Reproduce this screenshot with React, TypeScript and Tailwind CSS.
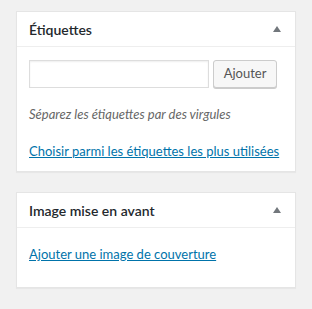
// Metabox sidebar – Étiquettes / Image mise en avant

function ToggleArrow() {
    return (
        <svg width="8" height="6" viewBox="0 0 8 6" className="block">
            <path d="M4 0 L8 6 L0 6 Z" fill="#72777c" />
        </svg>
    );
}

function Postbox({ title, children }: { title: string; children: React.ReactNode }) {
    return (
        <div className="bg-white border border-[#e5e5e5] shadow-[0_1px_1px_rgba(0,0,0,0.04)]">
            <div className="h-[35px] flex items-center justify-between pl-3 pr-[14px] border-b border-[#eeeeee]">
                <h2 className="text-[14px] font-semibold text-[#23282d]">{title}</h2>
                <ToggleArrow />
            </div>
            {children}
        </div>
    );
}

export default function App() {
    return (
        <div
            className="w-[312px] h-[309px] bg-[#f1f1f1] pt-[11px] px-4 flex flex-col gap-[20px]"
            style={{ fontFamily: "Lato, 'Noto Sans', sans-serif" }}
        >
            <Postbox title="Étiquettes">
                <div className="px-3 pt-[13px] pb-[10px]">
                    <div className="flex gap-1">
                        <input
                            type="text"
                            className="w-[180px] h-[28px] border border-[#dddddd] shadow-[inset_0_1px_2px_rgba(0,0,0,0.07)] outline-none"
                        />
                        <button className="w-[64px] h-[28px] bg-[#f7f7f7] border border-[#cccccc] rounded-[3px] shadow-[0_1px_0_#cccccc] text-[13px] text-[#555555]">
                            Ajouter
                        </button>
                    </div>
                    <p className="mt-[17px] text-[13px] italic text-[#666666] leading-[19px]">
                        Séparez les étiquettes par des virgules
                    </p>
                    <p className="mt-[18px] text-[13px] leading-[19px] whitespace-nowrap">
                        <a href="#" className="text-[#0073aa] underline">
                            Choisir parmi les étiquettes les plus utilisées
                        </a>
                    </p>
                </div>
            </Postbox>

            <Postbox title="Image mise en avant">
                <div className="px-3 pt-[17px] pb-[23px]">
                    <p className="text-[13px] leading-[19px]">
                        <a href="#" className="text-[#0073aa] underline">
                            Ajouter une image de couverture
                        </a>
                    </p>
                </div>
            </Postbox>
        </div>
    );
}
